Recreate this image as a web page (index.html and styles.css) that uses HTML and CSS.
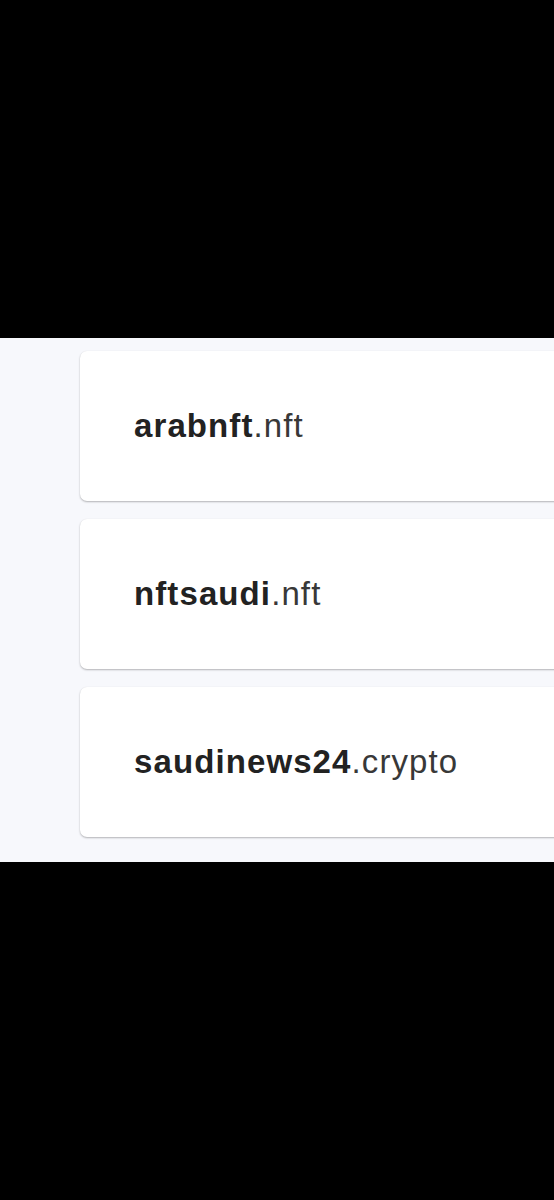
FILE: index.html
```html
<!DOCTYPE html>
<html>
<head>
<meta charset="utf-8">
<link rel="stylesheet" href="styles.css">
</head>
<body>
<div class="bar-top"></div>
<section class="list">
  <div class="card"><span class="name">arabnft</span><span class="tld">.nft</span></div>
  <div class="card"><span class="name">nftsaudi</span><span class="tld">.nft</span></div>
  <div class="card"><span class="name">saudinews24</span><span class="tld">.crypto</span></div>
</section>
<div class="bar-bottom"></div>
</body>
</html>
```
FILE: styles.css
```css
html, body {
  margin: 0;
  padding: 0;
  background: #000;
  height: 1200px;
  overflow: hidden;
}
.bar-top {
  height: 338px;
  background: #000;
}
.list {
  background: #f7f8fc;
  padding: 13px 0 25px 80px;
  display: flex;
  flex-direction: column;
  gap: 18px;
  overflow: hidden;
}
.card {
  width: 520px;
  height: 150px;
  box-sizing: border-box;
  background: #fff;
  border-radius: 7px;
  box-shadow: 0 1px 2px rgba(0, 0, 0, 0.28), 0 0 1px rgba(0, 0, 0, 0.06);
  display: flex;
  align-items: center;
  padding-left: 54px;
  padding-bottom: 1px;
  font-family: "Liberation Sans", Arial, sans-serif;
  font-size: 33px;
  letter-spacing: 1.1px;
  color: #222;
  white-space: nowrap;
}
.name {
  font-weight: 700;
}
.tld {
  font-weight: 400;
  color: #383838;
}
```
